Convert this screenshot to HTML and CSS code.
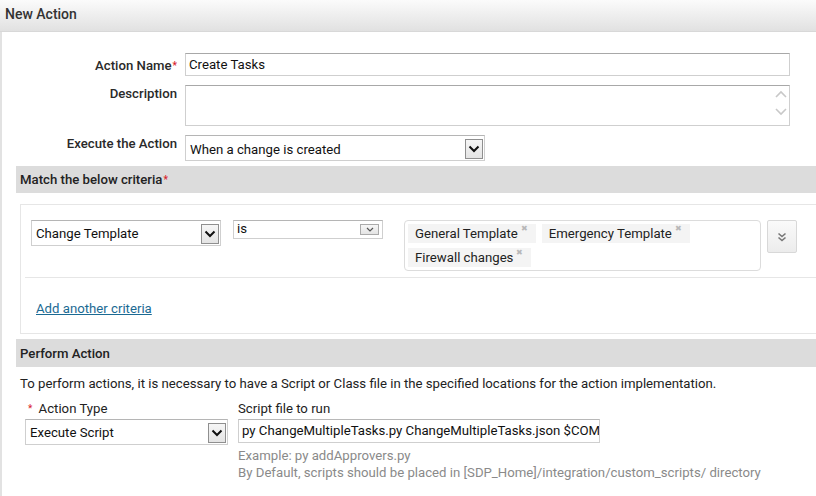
FILE: index.html
```html
<!DOCTYPE html>
<html>
<head>
<meta charset="utf-8">
<link rel="stylesheet" href="styles.css">
</head>
<body>
<div class="header">New Action</div>
<div class="main">
  <div class="form">
    <div class="row r1">
      <div class="label">Action Name<span class="req">*</span></div>
      <div class="input wide">Create Tasks</div>
    </div>
    <div class="row r2">
      <div class="label">Description</div>
      <div class="input wide textarea">
        <div class="scroll">
          <svg width="12" height="8" viewBox="0 0 12 8"><path d="M1 7 L6 2 L11 7" fill="none" stroke="#c8c8c8" stroke-width="1.6"/></svg>
          <svg width="12" height="8" viewBox="0 0 12 8"><path d="M1 1 L6 6 L11 1" fill="none" stroke="#c8c8c8" stroke-width="1.6"/></svg>
        </div>
      </div>
    </div>
    <div class="row r3">
      <div class="label">Execute the Action</div>
      <div class="select exec"><span class="val">When a change is created</span><span class="arrow"><svg width="12" height="8" viewBox="0 0 12 8"><path d="M1.5 1.5 L6 6 L10.5 1.5" fill="none" stroke="#111" stroke-width="2"/></svg></span></div>
    </div>
  </div>

  <div class="bar bar1">Match the below criteria<span class="req">*</span></div>

  <div class="criteria">
    <div class="crow">
      <div class="select ct"><span class="val">Change Template</span><span class="arrow"><svg width="12" height="8" viewBox="0 0 12 8"><path d="M1.5 1.5 L6 6 L10.5 1.5" fill="none" stroke="#111" stroke-width="2"/></svg></span></div>
      <div class="select is"><span class="val">is</span><span class="arrow small"><svg width="8" height="5" viewBox="0 0 8 5"><path d="M1 1 L4 4 L7 1" fill="none" stroke="#555" stroke-width="1.2"/></svg></span></div>
      <div class="chips">
        <span class="chip">General Template<span class="x">✖</span></span>
        <span class="chip">Emergency Template<span class="x">✖</span></span>
        <span class="chip">Firewall changes<span class="x">✖</span></span>
      </div>
      <div class="more"><svg width="10" height="10" viewBox="0 0 10 10"><path d="M1.5 1.5 L5 4.5 L8.5 1.5 M1.5 5.5 L5 8.5 L8.5 5.5" fill="none" stroke="#777" stroke-width="1.6"/></svg></div>
    </div>
    <div class="addrow"><a class="link" href="#">Add another criteria</a></div>
  </div>

  <div class="bar bar2">Perform Action</div>
  <p class="info">To perform actions, it is necessary to have a Script or Class file in the specified locations for the action implementation.</p>
  <div class="perform">
    <div class="col c1">
      <div class="plabel"><span class="req">*</span> Action Type</div>
      <div class="select at"><span class="val">Execute Script</span><span class="arrow"><svg width="12" height="8" viewBox="0 0 12 8"><path d="M1.5 1.5 L6 6 L10.5 1.5" fill="none" stroke="#111" stroke-width="2"/></svg></span></div>
    </div>
    <div class="col c2">
      <div class="plabel">Script file to run</div>
      <div class="input script">py ChangeMultipleTasks.py ChangeMultipleTasks.json $COM</div>
      <div class="hint">Example: py addApprovers.py</div>
      <div class="hint">By Default, scripts should be placed in [SDP_Home]/integration/custom_scripts/ directory</div>
    </div>
  </div>
</div>
</body>
</html>
```
FILE: styles.css
```css
html, body {
  margin: 0;
  padding: 0;
  background: #fff;
  font-family: Roboto, "Liberation Sans", sans-serif;
  font-size: 13.2px;
  color: #222;
  overflow: hidden;
}
.header {
  height: 32px;
  box-sizing: border-box;
  padding: 6px 0 0 5px;
  font-size: 14px;
  font-weight: 500;
  color: #333;
  background: linear-gradient(#fbfbfb, #e1e1e1);
  border-bottom: 1px solid #d8d8d8;
}
.main {
  border-left: 2px solid #e2e2e2;
  height: 464px;
}
.req { color: #d8232a; font-size: 10px; vertical-align: 1px; margin-left: 1px; }
.form { padding-top: 21px; }
.row { display: flex; align-items: flex-start; }
.label {
  width: 175px;
  text-align: right;
  margin-right: 8px;
  font-weight: 500;
  color: #2a2a2a;
}
.r1 .label { padding-top: 5px; }
.r2 { margin-top: 9px; }
.r2 .label { padding-top: 1px; }
.r3 { margin-top: 9px; }
.r3 .label { padding-top: 1px; }
.input {
  box-sizing: border-box;
  border: 1px solid #cfcfcf;
  border-top-color: #a8a8a8;
  background: #fff;
  padding: 3px 3px;
  color: #111;
  white-space: nowrap;
  overflow: hidden;
}
.wide { width: 605px; height: 23px; }
.textarea { height: 41px; position: relative; }
.scroll {
  position: absolute;
  right: 2px;
  top: 4px;
  display: flex;
  flex-direction: column;
  gap: 10px;
}
.select {
  box-sizing: border-box;
  display: flex;
  align-items: center;
  justify-content: space-between;
  border: 1px solid #cfcfcf;
  border-top-color: #b5b5b5;
  background: #fff;
  color: #111;
  padding: 0 1px 0 4px;
  white-space: nowrap;
}
.arrow {
  width: 18px;
  height: 20px;
  box-sizing: border-box;
  border: 1px solid #8f8f8f;
  background: linear-gradient(#f6f6f6, #e4e4e4);
  display: flex;
  align-items: center;
  justify-content: center;
  flex-shrink: 0;
}
.arrow.small {
  width: 19px;
  height: 11px;
  border-color: #aaa;
}
.exec { width: 300px; height: 26px; padding-top: 2px; }
.bar {
  margin-left: 14px;
  background: #dcdcdc;
  height: 27px;
  box-sizing: border-box;
  padding: 6px 0 0 4px;
  font-weight: 500;
  color: #222;
}
.bar1 { margin-top: 5px; }
.criteria {
  margin: 11px 0 0 18px;
  border: 1px solid #e6e6e6;
  border-right: none;
  height: 130px;
  box-sizing: border-box;
}
.crow {
  display: flex;
  align-items: flex-start;
  margin-left: 4px;
  padding: 15px 0 6px 6px;
  border-bottom: 1px solid #e6e6e6;
  height: 73px;
  box-sizing: border-box;
}
.ct { width: 190px; height: 26px; padding-top: 1px; }
.is {
  width: 150px;
  height: 19px;
  margin-left: 12px;
  padding: 0 3px 0 3px;
  align-items: flex-start;
}
.is .val { line-height: 16px; }
.is .arrow { margin-top: 3px; }
.chips {
  margin-left: 21px;
  width: 357px;
  height: 51px;
  box-sizing: border-box;
  border: 1px solid #dcdcdc;
  border-radius: 4px;
  padding: 3px 0 0 3px;
  display: flex;
  flex-wrap: wrap;
  gap: 5px 6px;
  align-content: flex-start;
}
.chip {
  background: #f4f4f4;
  height: 19px;
  line-height: 19px;
  padding: 0 8px 0 7px;
  color: #222;
  display: inline-flex;
  align-items: flex-start;
}
.x { color: #b8b8b8; font-size: 8px; line-height: 10px; margin-left: 3px; }
.more {
  margin-left: 6px;
  width: 30px;
  height: 33px;
  box-sizing: border-box;
  border: 1px solid #d8d8d8;
  border-radius: 2px;
  background: linear-gradient(#fafafa, #ececec);
  display: flex;
  align-items: center;
  justify-content: center;
}
.addrow { padding: 23px 0 0 15px; }
.link { color: #1b6a93; text-decoration: underline; }
.bar2 { margin-top: 5px; height: 28px; padding-top: 7px; }
.info { margin: 9px 0 0 18px; color: #222; }
.perform { display: flex; margin-top: 10px; }
.c1 { margin-left: 23px; width: 203px; }
.c2 { margin-left: 10px; }
.plabel { color: #222; height: 17px; }
.c1 .plabel { padding-left: 3px; }
.plabel .req { margin-left: 0; margin-right: 3px; }
.at { width: 203px; height: 26px; margin-top: 1px; padding-top: 1px; }
.script { width: 362px; height: 24px; margin-top: 1px; padding: 3px 3px; border-top-color: #b8b8b8; }
.hint { color: #8a8a8a; line-height: 17px; }
.c2 .script + .hint { margin-top: 4px; }
```
